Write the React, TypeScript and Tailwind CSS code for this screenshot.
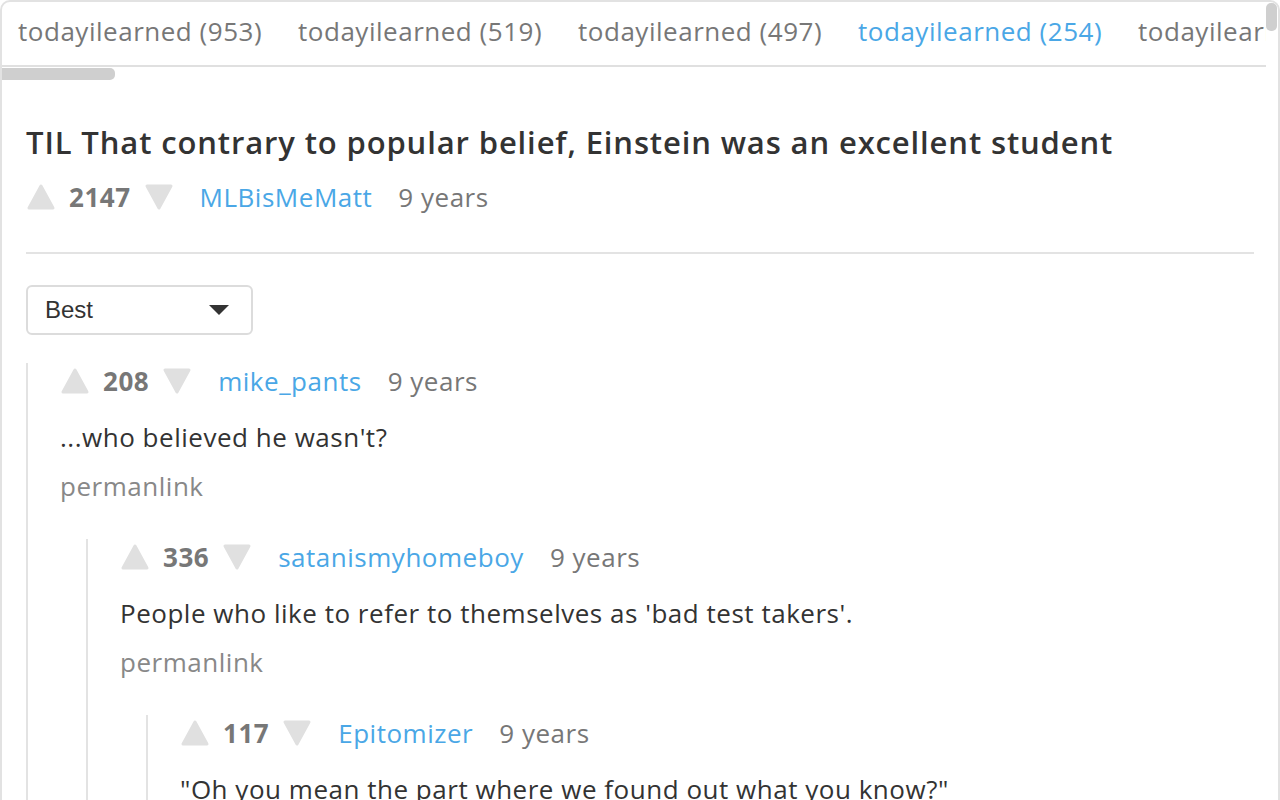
import React from "react";

const tabs = [
  { label: "todayilearned (953)", active: false },
  { label: "todayilearned (519)", active: false },
  { label: "todayilearned (497)", active: false },
  { label: "todayilearned (254)", active: true },
  { label: "todayilearned (188)", active: false },
];

function Arrow({ down = false }: { down?: boolean }) {
  return (
    <svg width="30" height="28" viewBox="0 0 30 28" className="flex-none">
      {down ? (
        <path d="M3 3 L27 3 L15 25 Z" fill="#e0e0e0" stroke="#e0e0e0" strokeWidth="3" strokeLinejoin="round" />
      ) : (
        <path d="M15 3 L27 25 L3 25 Z" fill="#e0e0e0" stroke="#e0e0e0" strokeWidth="3" strokeLinejoin="round" />
      )}
    </svg>
  );
}

function Meta({ score, author }: { score: string; author: string }) {
  return (
    <div className="flex items-center h-[34px] text-[26px] tracking-[0.02em] whitespace-nowrap">
      <Arrow />
      <span className="ml-[13px] font-bold text-[#777]">{score}</span>
      <span className="ml-[13px]">
        <Arrow down />
      </span>
      <span className="ml-[26px] text-[#4aa7e6]">{author}</span>
      <span className="ml-[26px] text-[#777]">9 years</span>
    </div>
  );
}

type C = { score: string; author: string; body: string; child?: C };

function Comment({ c }: { c: C }) {
  return (
    <div className="border-l-2 border-[#e3e3e3] pl-[32px] pt-[1px]">
      <Meta score={c.score} author={c.author} />
      <p className="mt-[22px] text-[26px] tracking-[0.02em] leading-[34px] text-[#333] whitespace-nowrap">{c.body}</p>
      <p className="mt-[15px] text-[26px] tracking-[0.02em] leading-[34px] text-[#888]">permanlink</p>
      {c.child && (
        <div className="mt-[36px] ml-[26px]">
          <Comment c={c.child} />
        </div>
      )}
    </div>
  );
}

const thread: C = {
  score: "208",
  author: "mike_pants",
  body: "...who believed he wasn't?",
  child: {
    score: "336",
    author: "satanismyhomeboy",
    body: "People who like to refer to themselves as 'bad test takers'.",
    child: {
      score: "117",
      author: "Epitomizer",
      body: "\"Oh you mean the part where we found out what you know?\"",
    },
  },
};

export default function App() {
  return (
    <div
      className="w-[1280px] h-[800px] bg-white overflow-hidden"
      style={{ fontFamily: "'Open Sans', 'Noto Sans', sans-serif" }}
    >
      <div className="h-[810px] border-2 border-[#e2e2e2] rounded-[10px] flex overflow-hidden">
        <div className="flex-1 min-w-0">
          <div className="h-[65px] pb-[4px] border-b-2 border-[#e0e0e0] flex items-center overflow-hidden whitespace-nowrap">
            {tabs.map((t, i) => (
              <div
                key={i}
                className={`flex-none w-[280px] pl-[16px] text-[26px] tracking-[0.02em] ${t.active ? "text-[#4aa7e6]" : "text-[#777]"}`}
              >
                {t.label}
              </div>
            ))}
          </div>
          <div className="h-[14px] flex items-center">
            <div className="h-[12px] w-[113px] bg-[#cfcfcf] rounded-r-[5px]" />
          </div>

          <div className="pl-[24px] pr-[12px]">
            <h1 className="mt-[41px] text-[31px] tracking-[0.028em] leading-[40px] font-semibold text-[#333] whitespace-nowrap">
              TIL That contrary to popular belief, Einstein was an excellent student
            </h1>
            <div className="mt-[18px]">
              <Meta score="2147" author="MLBisMeMatt" />
            </div>
            <div className="mt-[38px] border-t-2 border-[#e3e3e3]" />

            <div className="mt-[31px] w-[227px] h-[50px] border-2 border-[#dcdcdc] rounded-[6px] flex items-center justify-between pl-[17px] pr-[22px]">
              <span className="text-[24px] text-[#333]" style={{ fontFamily: "'Liberation Sans', Arial, sans-serif" }}>
                Best
              </span>
              <svg width="20" height="10" viewBox="0 0 20 10">
                <path d="M0 0 L20 0 L10 10 Z" fill="#333" />
              </svg>
            </div>

            <div className="mt-[28px]">
              <Comment c={thread} />
            </div>
          </div>
        </div>
        <div className="w-[12px] flex-none pt-[1px]">
          <div className="h-[28px] w-[11px] bg-[#cfcfcf] rounded-[5px]" />
        </div>
      </div>
    </div>
  );
}
